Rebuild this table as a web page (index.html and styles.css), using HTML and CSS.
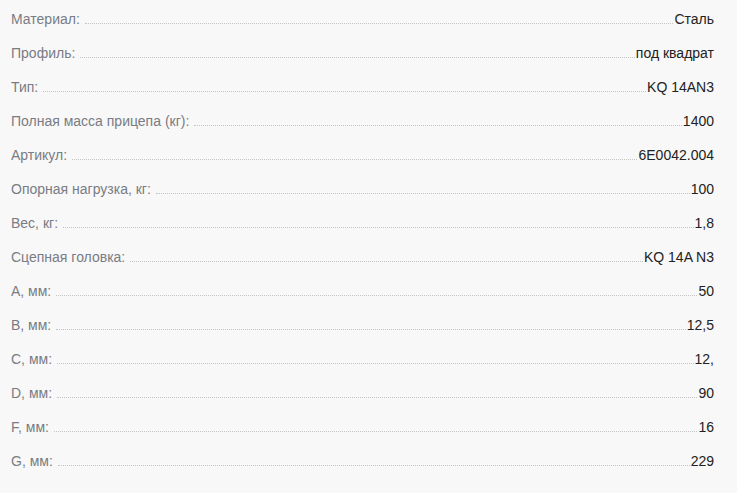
FILE: index.html
```html
<!DOCTYPE html>
<html lang="ru">
<head>
<meta charset="utf-8">
<link rel="stylesheet" href="styles.css">
</head>
<body>
<div class="specs">
  <div class="row"><span class="label">Материал:</span><span class="dots"></span><span class="value">Сталь</span></div>
  <div class="row"><span class="label">Профиль:</span><span class="dots"></span><span class="value">под квадрат</span></div>
  <div class="row"><span class="label">Тип:</span><span class="dots"></span><span class="value">KQ 14AN3</span></div>
  <div class="row"><span class="label">Полная масса прицепа (кг):</span><span class="dots"></span><span class="value">1400</span></div>
  <div class="row"><span class="label">Артикул:</span><span class="dots"></span><span class="value">6E0042.004</span></div>
  <div class="row"><span class="label">Опорная нагрузка, кг:</span><span class="dots"></span><span class="value">100</span></div>
  <div class="row"><span class="label">Вес, кг:</span><span class="dots"></span><span class="value">1,8</span></div>
  <div class="row"><span class="label">Сцепная головка:</span><span class="dots"></span><span class="value">KQ 14A N3</span></div>
  <div class="row"><span class="label">A, мм:</span><span class="dots"></span><span class="value">50</span></div>
  <div class="row"><span class="label">B, мм:</span><span class="dots"></span><span class="value">12,5</span></div>
  <div class="row"><span class="label">C, мм:</span><span class="dots"></span><span class="value">12,</span></div>
  <div class="row"><span class="label">D, мм:</span><span class="dots"></span><span class="value">90</span></div>
  <div class="row"><span class="label">F, мм:</span><span class="dots"></span><span class="value">16</span></div>
  <div class="row"><span class="label">G, мм:</span><span class="dots"></span><span class="value">229</span></div>
</div>
</body>
</html>
```
FILE: styles.css
```css
html, body {
  margin: 0;
  padding: 0;
  background: #f8f8f8;
}
body {
  font-family: "Liberation Sans", Arial, sans-serif;
  font-size: 14px;
}
.specs {
  padding: 2px 23px 0 11px;
}
.row {
  display: flex;
  align-items: baseline;
  line-height: 34px;
  height: 34px;
}
.label {
  color: #787c84;
  white-space: nowrap;
}
.dots {
  flex: 1;
  border-bottom: 1px dotted #c4c4c4;
  margin: 0 1px 0 5px;
  height: 0;
}
.value {
  color: #222;
  white-space: nowrap;
}
```
